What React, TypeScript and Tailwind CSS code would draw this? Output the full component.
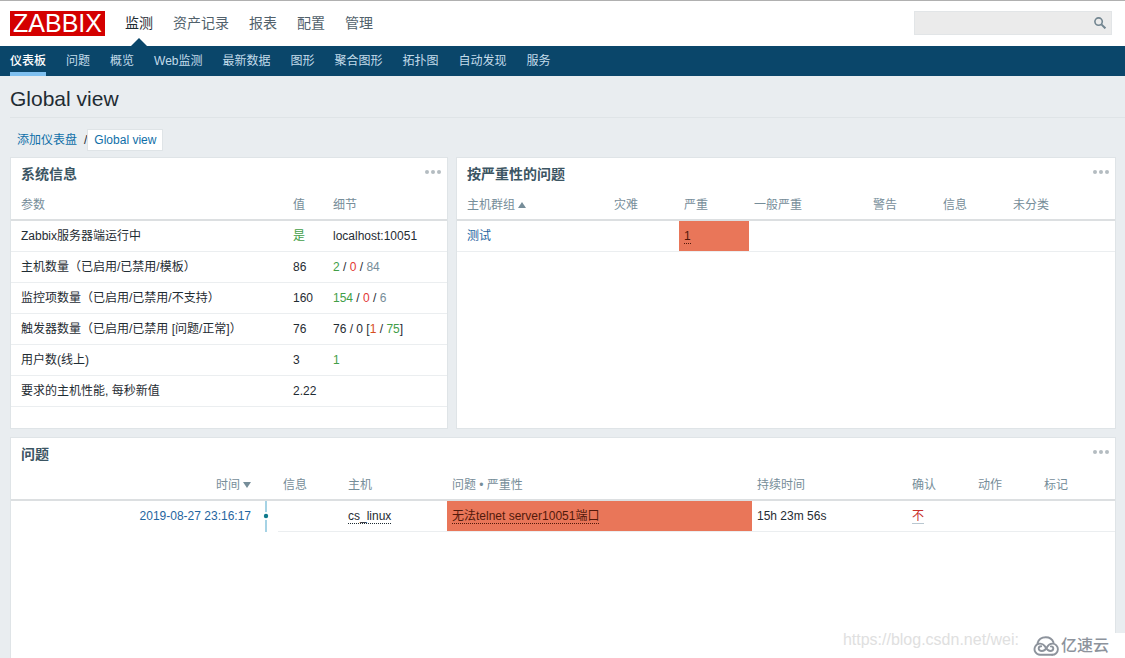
import type { ReactNode } from 'react'
import clsx from 'clsx'

const mainMenu = ['监测', '资产记录', '报表', '配置', '管理']

const subMenu = [
  '仪表板',
  '问题',
  '概览',
  'Web监测',
  '最新数据',
  '图形',
  '聚合图形',
  '拓扑图',
  '自动发现',
  '服务',
]

const severityColumns = ['灾难', '严重', '一般严重', '警告', '信息', '未分类']

const green = 'text-[#429e47]'
const red = 'text-[#e33734]'
const grey = 'text-[#768d99]'

const systemInfo: { name: string; value: ReactNode; details?: ReactNode }[] = [
  {
    name: 'Zabbix服务器端运行中',
    value: <span className={green}>是</span>,
    details: 'localhost:10051',
  },
  {
    name: '主机数量（已启用/已禁用/模板）',
    value: '86',
    details: (
      <>
        <span className={green}>2</span> / <span className={red}>0</span> / <span className={grey}>84</span>
      </>
    ),
  },
  {
    name: '监控项数量（已启用/已禁用/不支持）',
    value: '160',
    details: (
      <>
        <span className={green}>154</span> / <span className={red}>0</span> / <span className={grey}>6</span>
      </>
    ),
  },
  {
    name: '触发器数量（已启用/已禁用 [问题/正常]）',
    value: '76',
    details: (
      <>
        76 / 0 [<span className="text-[#d64e20]">1</span> / <span className={green}>75</span>]
      </>
    ),
  },
  { name: '用户数(线上)', value: '3', details: <span className={green}>1</span> },
  { name: '要求的主机性能, 每秒新值', value: '2.22' },
]

function Th({ children, className }: { children?: ReactNode; className?: string }) {
  return (
    <th
      className={clsx(
        'h-[31px] border-b-2 border-[#dcdfe1] px-[5px] text-left font-normal whitespace-nowrap text-[#768d99]',
        className
      )}
    >
      {children}
    </th>
  )
}

function Td({ children, className }: { children?: ReactNode; className?: string }) {
  return (
    <td className={clsx('h-[31px] border-b bg-clip-padding px-[5px] whitespace-nowrap', className ?? 'border-[#ebeef0]')}>
      {children}
    </td>
  )
}

function Widget({ title, className, children }: { title: string; className?: string; children: ReactNode }) {
  return (
    <section className={clsx('border border-[#dfe4e7] bg-white', className)}>
      <header className="flex h-8 items-center justify-between pr-[6px] pl-[10px]">
        <h2 className="text-sm font-bold text-[#3c5563]">{title}</h2>
        <button type="button" aria-label="Actions" className="mb-1 flex gap-[2px]">
          <i className="size-1 rounded-full bg-[#b4bcc1]" />
          <i className="size-1 rounded-full bg-[#b4bcc1]" />
          <i className="size-1 rounded-full bg-[#b4bcc1]" />
        </button>
      </header>
      {children}
    </section>
  )
}

function Header() {
  return (
    <header>
      <div className="flex h-[46px] items-center border-t border-[#b0b0b0] bg-white pr-[13px] pl-[10px]">
        <a
          href="#"
          className="flex h-[25px] w-[95px] items-center justify-center bg-[#d40000] text-[25px] leading-none text-white"
        >
          ZABBIX
        </a>
        <nav className="ml-5 flex h-full gap-5 text-sm">
          {mainMenu.map((item, i) => (
            <a
              key={item}
              href="#"
              className={clsx('relative flex items-center pb-[2px]', i === 0 ? 'text-[#1f2c33]' : 'text-[#51616b]')}
            >
              {item}
              {i === 0 && (
                <svg className="absolute bottom-0 left-1/2 h-2 w-4 -translate-x-1/2" viewBox="0 0 16 8" fill="#0a466a">
                  <path d="M8 0l8 8H0z" />
                </svg>
              )}
            </a>
          ))}
        </nav>
        <form className="relative ml-auto pb-[2px]">
          <input
            type="text"
            aria-label="Search"
            className="block h-6 w-[198px] border border-[#e2e5e7] bg-[#ebebeb] pr-7 pl-2 text-xs outline-none"
          />
          <button type="button" aria-label="Search" className="absolute top-[6px] right-[6px]">
            <svg className="size-3" viewBox="0 0 12 12" fill="none" stroke="#728590">
              <circle cx="4.6" cy="4.6" r="3.7" strokeWidth="1.6" />
              <path d="M7.4 7.4l4 4" strokeWidth="2" />
            </svg>
          </button>
        </form>
      </div>
      <nav className="flex h-[30px] gap-5 bg-[#0a466a] px-[10px]">
        {subMenu.map((item, i) => (
          <a
            key={item}
            href="#"
            className={clsx(
              'flex items-center border-b-4 pt-[3px]',
              i === 0 ? 'border-[#7fc0f0] font-medium text-white' : 'border-transparent text-[#c3dcea]'
            )}
          >
            {item}
          </a>
        ))}
      </nav>
    </header>
  )
}

function SystemInfo() {
  return (
    <Widget title="系统信息" className="min-h-[272px]">
      <table className="w-full table-fixed border-separate border-spacing-0">
        <thead>
          <tr>
            <Th className="pl-[10px]">参数</Th>
            <Th className="w-10">值</Th>
            <Th className="w-[119px]">细节</Th>
          </tr>
        </thead>
        <tbody>
          {systemInfo.map((row) => (
            <tr key={row.name}>
              <Td className="border-[#ebeef0] pl-[10px]">{row.name}</Td>
              <Td>{row.value}</Td>
              <Td>{row.details}</Td>
            </tr>
          ))}
        </tbody>
      </table>
    </Widget>
  )
}

function SeverityProblems() {
  return (
    <Widget title="按严重性的问题" className="min-h-[272px]">
      <table className="w-full table-fixed border-separate border-spacing-0">
        <colgroup>
          <col />
          <col className="w-[70px]" />
          <col className="w-[70px]" />
          <col className="w-[119px]" />
          <col className="w-[70px]" />
          <col className="w-[70px]" />
          <col className="w-[107px]" />
        </colgroup>
        <thead>
          <tr>
            <Th className="pl-[10px]">
              主机群组
              <svg className="ml-[3px] inline-block h-[6px] w-2" viewBox="0 0 8 6" fill="#768d99">
                <path d="M4 0l4 6H0z" />
              </svg>
            </Th>
            {severityColumns.map((name) => (
              <Th key={name}>{name}</Th>
            ))}
          </tr>
        </thead>
        <tbody>
          <tr>
            <Td className="border-[#ebeef0] pl-[10px]">
              <a href="#" className="text-[#1f65a0]">
                测试
              </a>
            </Td>
            <Td />
            <Td className="border-[#ebeef0] bg-[#e97659]">
              <a href="#" className="border-b border-dotted border-[#52190b] text-[#52190b]">
                1
              </a>
            </Td>
            <Td />
            <Td />
            <Td />
            <Td />
          </tr>
        </tbody>
      </table>
    </Widget>
  )
}

function Problems() {
  return (
    <Widget title="问题" className="flex-1 border-b-0">
      <table className="w-full table-fixed border-separate border-spacing-0">
        <colgroup>
          <col className="w-[245px]" />
          <col className="w-[22px]" />
          <col className="w-[65px]" />
          <col className="w-[104px]" />
          <col />
          <col className="w-[155px]" />
          <col className="w-[66px]" />
          <col className="w-[66px]" />
          <col className="w-[76px]" />
        </colgroup>
        <thead>
          <tr>
            <Th className="text-right">
              时间
              <svg className="ml-[3px] inline-block h-[6px] w-2" viewBox="0 0 8 6" fill="#768d99">
                <path d="M0 0h8L4 6z" />
              </svg>
            </Th>
            <Th />
            <Th>信息</Th>
            <Th>主机</Th>
            <Th>问题 • 严重性</Th>
            <Th>持续时间</Th>
            <Th>确认</Th>
            <Th>动作</Th>
            <Th>标记</Th>
          </tr>
        </thead>
        <tbody>
          <tr>
            <Td className="border-transparent text-right">
              <a href="#" className="text-[#1f65a0]">
                2019-08-27 23:16:17
              </a>
            </Td>
            <td className="p-0">
              {/* timeline marker */}
              <svg className="ml-[7px] block h-[31px] w-[6px]" viewBox="0 0 6 31">
                <path d="M2 0h2v31H2z" fill="#a6d3e5" />
                <circle cx="3" cy="15" r="4" fill="#fff" />
                <circle cx="3" cy="15" r="2.2" fill="#0f7a8c" />
              </svg>
            </td>
            <Td />
            <Td>
              <a href="#" className="border-b border-dotted border-[#1f2c33]">
                cs_linux
              </a>
            </Td>
            <Td className="border-[#ebeef0] bg-[#e97659]">
              <a href="#" className="border-b border-dotted border-[#52190b] text-[#52190b]">
                无法telnet server10051端口
              </a>
            </Td>
            <Td>15h 23m 56s</Td>
            <Td>
              <a href="#" className="border-b border-[#b9c7d0] text-[#c9302c]">
                不
              </a>
            </Td>
            <Td />
            <Td />
          </tr>
        </tbody>
      </table>
    </Widget>
  )
}

function Watermark() {
  return (
    <div className="pointer-events-none absolute right-0 bottom-0 flex items-end">
      <span className="mb-2 text-base leading-5 whitespace-nowrap text-[#e0e0e0]">https://blog.csdn.net/wei:</span>
      <div className="flex h-[25px] items-center bg-white pr-4 pl-[14px] text-base leading-none font-medium text-[#8d939c]">
        <svg
          className="mr-[2px] h-5 w-[26px]"
          viewBox="0 0 26 20"
          fill="none"
          stroke="#8d939c"
          strokeWidth="1.9"
          strokeLinecap="round"
        >
          <path d="M4.500 7.200C5.500 3.500 8.800 1.200 12.800 1.200c3.600 0 6.500 1.900 7.700 5.200" />
          <path d="M19.200 18.800H7A5.600 5.600 0 1 1 11.600 9.800c1.600 2 2.500 5.200 5.700 5.200 1.800 0 3-1 3-2.400s-1-2.200-2.400-2.200" />
          <path d="M19.200 18.800a5.500 5.500 0 0 0 .2-11.200c-2.700 0-4.300 1.500-5.300 3.400-1.200 2.200-2.700 4-5.300 4-1.900 0-3.100-1-3.100-2.400s1-2.300 2.500-2.300" />
        </svg>
        亿速云
      </div>
    </div>
  )
}

export default function App() {
  return (
    <div className="relative flex min-h-screen flex-col bg-[#e9edf0] font-['Liberation_Sans','Noto_Sans_CJK_SC',sans-serif] text-xs text-[#1f2c33]">
      <Header />
      <h1 className="ml-[10px] flex h-[42px] items-center border-b border-[#dfe4e7] pt-1 text-[21px]">Global view</h1>
      <div className="flex h-[39px] items-center pt-[5px] pl-[17px]">
        <a href="#" className="text-[#0f6fa8]">
          添加仪表盘
        </a>
        <span className="ml-[7px]">/</span>
        <a
          href="#"
          className="flex h-[22px] items-center border border-[#dfe4e7] bg-white px-[6px] text-[#0f6fa8]"
        >
          Global view
        </a>
      </div>
      <main className="flex flex-1 flex-col gap-2 pr-[9px] pl-[10px]">
        <div className="grid grid-cols-[438fr_660fr] gap-2">
          <SystemInfo />
          <SeverityProblems />
        </div>
        <Problems />
      </main>
      <Watermark />
    </div>
  )
}
